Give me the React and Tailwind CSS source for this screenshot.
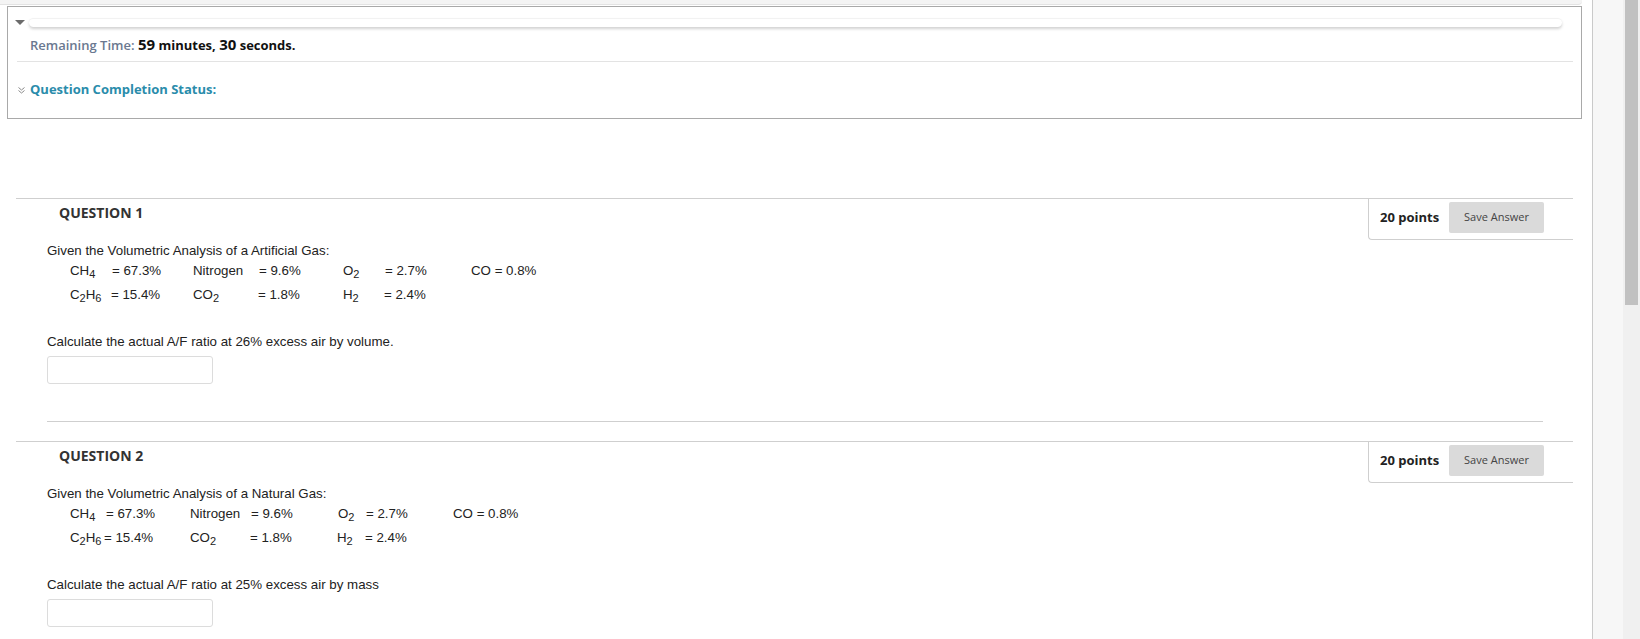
import React from "react";

const Sub = ({ children }) => (
  <span className="relative top-[3px] text-[11px] leading-none">{children}</span>
);

const Cell = ({ w, children }) => (
  <span className={`inline-block shrink-0 whitespace-nowrap ${w}`}>{children}</span>
);

function PointsBox() {
  return (
    <div className="w-[205px] h-[41px] border-l border-b border-[#cfcfcf] rounded-bl-[4px] flex items-start pt-[3px] pl-[11px] shrink-0">
      <span className="w-[69px] h-[31px] flex items-center text-[13px] font-bold text-[#222] font-['Open_Sans',sans-serif]">
        20 points
      </span>
      <button className="w-[95px] h-[31px] bg-[#dadada] rounded-[2px] text-[11px] text-[#444] font-['Open_Sans',sans-serif] flex items-center justify-center">
        Save Answer
      </button>
    </div>
  );
}

function Question({ num, gas, rows, calc }) {
  return (
    <div className="ml-[16px] w-[1557px] border-t border-[#cfcfcf]">
      <div className="flex justify-between">
        <div className="pl-[43px] pt-[5px] text-[14px] leading-[18px] font-bold text-[#333] font-['Open_Sans',sans-serif]">
          QUESTION {num}
        </div>
        <PointsBox />
      </div>
      <div className="pl-[31px] font-['Liberation_Sans',Arial,sans-serif] text-[13.3px] text-[#222]">
        <div className="mt-[3px] leading-[16px]">Given the Volumetric Analysis of a {gas} Gas:</div>
        <div className="pl-[23px]">
          {rows.map((r, i) => (
            <div key={i} className="flex h-[24px] items-center leading-[16px]">
              {r}
            </div>
          ))}
        </div>
        <div className="mt-[27px] leading-[16px]">{calc}</div>
        <div className="mt-[6px] w-[166px] h-[28px] border border-[#dcdcdc] rounded-[3px] bg-white" />
      </div>
    </div>
  );
}

export default function App() {
  const q1rows = [
    <>
      <Cell w="w-[42px]">CH<Sub>4</Sub></Cell>
      <Cell w="w-[81px]">= 67.3%</Cell>
      <Cell w="w-[66px]">Nitrogen</Cell>
      <Cell w="w-[84px]">= 9.6%</Cell>
      <Cell w="w-[42px]">O<Sub>2</Sub></Cell>
      <Cell w="w-[86px]">= 2.7%</Cell>
      <Cell w="w-[80px]">CO = 0.8%</Cell>
    </>,
    <>
      <Cell w="w-[41px]">C<Sub>2</Sub>H<Sub>6</Sub></Cell>
      <Cell w="w-[82px]">= 15.4%</Cell>
      <Cell w="w-[65px]">CO<Sub>2</Sub></Cell>
      <Cell w="w-[85px]">= 1.8%</Cell>
      <Cell w="w-[41px]">H<Sub>2</Sub></Cell>
      <Cell w="w-[80px]">= 2.4%</Cell>
    </>,
  ];
  const q2rows = [
    <>
      <Cell w="w-[36px]">CH<Sub>4</Sub></Cell>
      <Cell w="w-[84px]">= 67.3%</Cell>
      <Cell w="w-[61px]">Nitrogen</Cell>
      <Cell w="w-[87px]">= 9.6%</Cell>
      <Cell w="w-[28px]">O<Sub>2</Sub></Cell>
      <Cell w="w-[87px]">= 2.7%</Cell>
      <Cell w="w-[80px]">CO = 0.8%</Cell>
    </>,
    <>
      <Cell w="w-[34px]">C<Sub>2</Sub>H<Sub>6</Sub></Cell>
      <Cell w="w-[86px]">= 15.4%</Cell>
      <Cell w="w-[60px]">CO<Sub>2</Sub></Cell>
      <Cell w="w-[87px]">= 1.8%</Cell>
      <Cell w="w-[28px]">H<Sub>2</Sub></Cell>
      <Cell w="w-[80px]">= 2.4%</Cell>
    </>,
  ];

  return (
    <div className="w-[1640px] h-[639px] overflow-hidden flex bg-white">
      {/* main page */}
      <div className="w-[1592px] shrink-0">
        <div className="w-[1582px] h-[5px] bg-[#f4f4f4] border-b border-[#e3e3e3] rounded-br-[4px]" />
        <div className="ml-[7px] mt-[1px] w-[1575px] h-[113px] border border-[#a9a9a9] bg-white">
          <div className="flex items-center pt-[11px] pl-[7px] pr-[19px]">
            <svg width="10" height="5" viewBox="0 0 10 5" className="shrink-0">
              <polygon points="0,0 10,0 5,5" fill="#6b6b6b" />
            </svg>
            <div className="ml-[4px] flex-1 h-[9px] rounded-full bg-white border-t border-[#f2f2f2] shadow-[0_2px_3px_rgba(0,0,0,0.18)]" />
          </div>
          <div className="mt-[8px] pl-[22px] leading-[18px] font-['Open_Sans',sans-serif] text-[13px] font-semibold">
            <span className="text-[#6a7890]">Remaining Time: </span>
            <span className="text-[#111] font-bold">
              <span className="text-[15px]">59</span> minutes,{" "}
              <span className="text-[15px]">30</span> seconds.
            </span>
          </div>
          <div className="mt-[7px] ml-[9px] mr-[8px] border-t border-[#e3e3e3]" />
          <div className="mt-[18px] pl-[10px] flex items-center leading-[18px]">
            <svg width="7" height="7" viewBox="0 0 7 7" className="shrink-0 mt-[2px]">
              <polyline points="0.5,0.5 3.5,3 6.5,0.5" fill="none" stroke="#8a8a8a" strokeWidth="1" />
              <polyline points="0.5,3.5 3.5,6 6.5,3.5" fill="none" stroke="#8a8a8a" strokeWidth="1" />
            </svg>
            <span className="ml-[5px] text-[13px] font-bold text-[#2a8cab] font-['Open_Sans',sans-serif]">
              Question Completion Status:
            </span>
          </div>
        </div>

        <div className="mt-[79px]">
          <Question
            num={1}
            gas="Artificial"
            rows={q1rows}
            calc="Calculate the actual A/F ratio at 26% excess air by volume."
          />
        </div>
        <div className="ml-[47px] mt-[37px] w-[1496px] border-t border-[#cfcfcf]" />
        <div className="mt-[19px]">
          <Question
            num={2}
            gas="Natural"
            rows={q2rows}
            calc="Calculate the actual A/F ratio at 25% excess air by mass"
          />
        </div>
      </div>
      {/* right gutter */}
      <div className="w-[31px] shrink-0 border-l border-[#cacaca] bg-[#f7f7f7]" />
      {/* scrollbar */}
      <div className="w-[17px] shrink-0 bg-[#f0f0f0] px-[2px]">
        <div className="h-[305px] bg-[#c1c1c1]" />
      </div>
    </div>
  );
}
